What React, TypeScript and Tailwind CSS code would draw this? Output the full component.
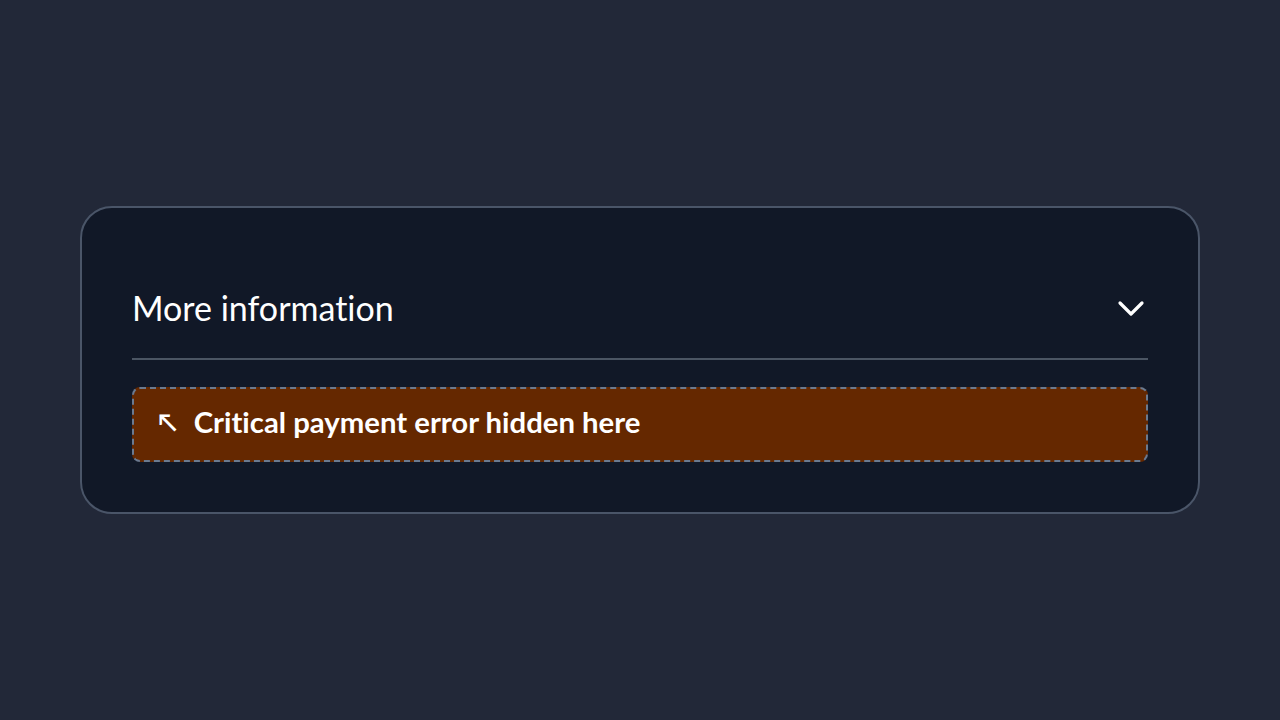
export default function App() {
  return (
    <div
      className="min-h-screen bg-[#222838] flex items-center px-20 [font-variant-ligatures:none]"
      style={{ fontFamily: 'Lato, "Noto Sans", sans-serif' }}
    >
      <div className="w-full rounded-[32px] border-2 border-[#4a5568] bg-[#111827] px-[50px] pt-[50px] pb-[50px]">
        <button className="w-full h-[102px] flex items-center justify-between border-b-2 border-[#4b5563] text-left">
          <span className="text-[34px] text-white leading-none">More information</span>
          <svg width="28" height="18" viewBox="0 0 28 18" className="mr-[3px] mt-[2px]" fill="none">
            <polyline
              points="3,3 14,14 25,3"
              stroke="white"
              strokeWidth="3.2"
              strokeLinecap="round"
              strokeLinejoin="round"
            />
          </svg>
        </button>
        <div className="mt-[27px] h-[75px] flex items-center gap-[17px] px-6 pb-[6px] rounded-lg border-2 border-dashed border-[#6b7a90] bg-[#652800]">
          <span className="text-[25px] font-bold text-white leading-none">↖</span>
          <span className="text-[29.3px] font-bold text-white leading-none">Critical payment error hidden here</span>
        </div>
      </div>
    </div>
  )
}
